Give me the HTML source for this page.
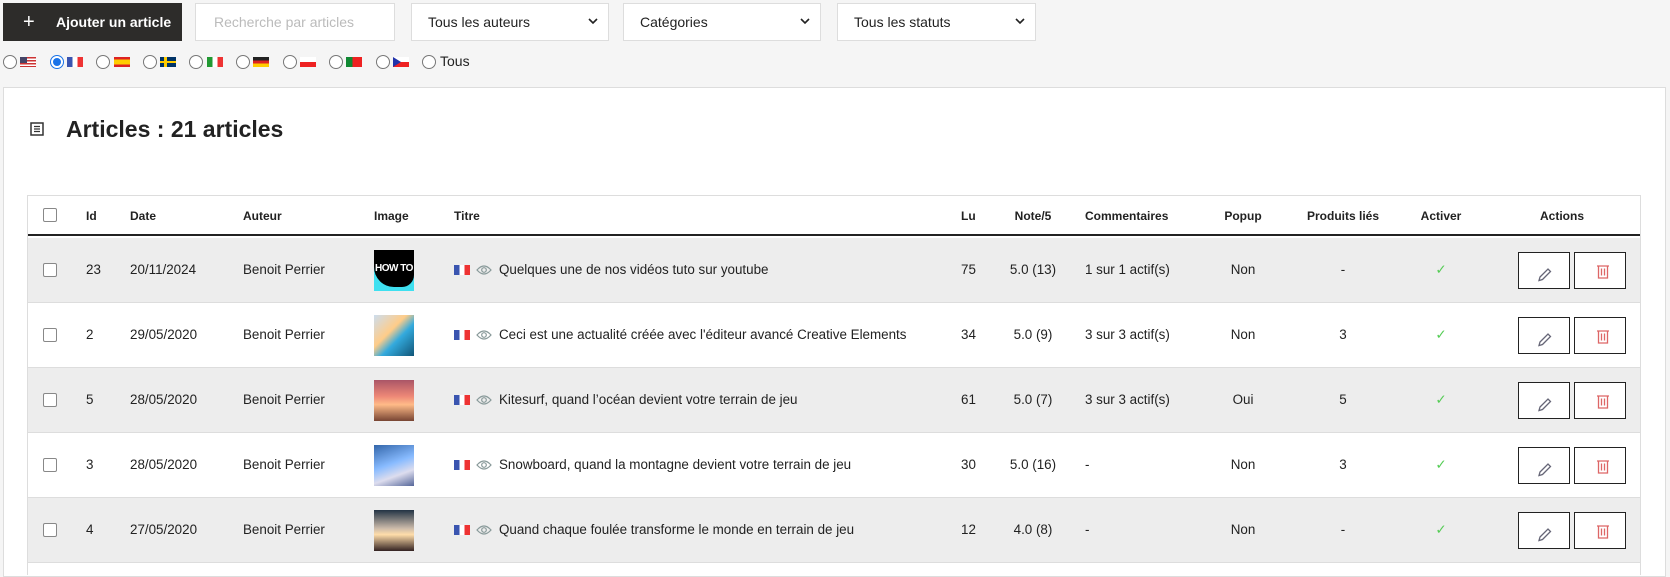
<!DOCTYPE html>
<html><head><meta charset="utf-8"><style>
*{box-sizing:border-box;margin:0;padding:0}
body{width:1670px;height:564px;background:#f5f5f5;font-family:"Liberation Sans",sans-serif;color:#222;position:relative;overflow:hidden;font-size:13px}
.a{position:absolute}
.btn{left:3px;top:3px;width:179px;height:38px;background:#2d2c2a;color:#fff;font-weight:bold;font-size:14px;line-height:38px}
.inp{top:3px;height:38px;background:#fff;border:1px solid #ddd;line-height:36px;padding-left:18px;font-size:14px}
.sel{padding-left:16px;color:#222}
.sel svg{position:absolute;right:10px;top:14px}
.rad{top:55px;width:14px;height:14px;border:1px solid #777;border-radius:50%;background:#fff}
.flag{width:16px;height:10px}
.panel{left:3px;top:87px;width:1663px;height:490px;background:#fff;border:1px solid #ddd}
.tbl{left:27px;top:195px;width:1614px;height:380px;border:1px solid #ddd;border-bottom:none;background:#fff}
.row{position:absolute;left:28px;width:1612px;height:65px;border-bottom:1px solid #ddd}
.row div,.hd div{position:absolute}
.row div{top:0;line-height:64px;font-size:13.4px;white-space:nowrap}
.hd div{top:0;line-height:40px;font-weight:bold;font-size:12px}
.c{text-align:center}
.cb{width:14px;height:14px;border:1px solid #888;border-radius:2px;background:#fff;top:25px!important}
.th{top:12px!important;width:40px;height:41px;overflow:hidden}
.ab{top:14px!important;width:52px;height:37px;border:1px solid #222;background:#fff}
.eye{position:absolute;left:448px;top:26px}
</style></head><body>
<div class="a btn"><span style="position:absolute;left:20px;font-size:20px;font-weight:normal">+</span><span style="position:absolute;left:53px">Ajouter un article</span></div>
<div class="a inp" style="left:195px;width:200px;color:#bbb">Recherche par articles</div>
<div class="a inp sel" style="left:411px;width:198px">Tous les auteurs<svg width="10" height="7"><path d="M1 1l4 4 4-4" stroke="#222" stroke-width="1.6" fill="none"/></svg></div>
<div class="a inp sel" style="left:623px;width:198px">Catégories<svg width="10" height="7"><path d="M1 1l4 4 4-4" stroke="#222" stroke-width="1.6" fill="none"/></svg></div>
<div class="a inp sel" style="left:837px;width:199px">Tous les statuts<svg width="10" height="7"><path d="M1 1l4 4 4-4" stroke="#222" stroke-width="1.6" fill="none"/></svg></div>

<div class="a rad" style="left:3px"></div><div class="a flag" style="left:20px;top:57px;background:repeating-linear-gradient(#c33 0 1.5px,#fff 1.5px 3px)"><div style="width:7px;height:6px;background:#446"></div></div>
<div class="a rad" style="left:50px;border-color:#1a73e8"><div style="margin:2px;width:8px;height:8px;border-radius:50%;background:#1a73e8"></div></div><div class="a flag" style="left:67px;top:57px;background:linear-gradient(90deg,#3a55b0 33%,#fff 33% 66%,#e33 66%)"></div>
<div class="a rad" style="left:96px"></div><div class="a flag" style="left:114px;top:57px;background:linear-gradient(#d22 25%,#fc0 25% 75%,#d22 75%)"></div>
<div class="a rad" style="left:143px"></div><div class="a flag" style="left:160px;top:57px;background:linear-gradient(#036 40%,#fc0 40% 60%,#036 60%)"><div style="position:absolute;left:4px;width:3px;height:10px;background:#fc0"></div></div>
<div class="a rad" style="left:189px"></div><div class="a flag" style="left:207px;top:57px;background:linear-gradient(90deg,#293 33%,#fff 33% 66%,#e33 66%)"></div>
<div class="a rad" style="left:236px"></div><div class="a flag" style="left:253px;top:57px;background:linear-gradient(#222 33%,#d22 33% 66%,#fc0 66%)"></div>
<div class="a rad" style="left:283px"></div><div class="a flag" style="left:300px;top:57px;background:linear-gradient(#fff 50%,#e22 50%)"></div>
<div class="a rad" style="left:329px"></div><div class="a flag" style="left:346px;top:57px;background:linear-gradient(90deg,#183 40%,#e22 40%)"></div>
<div class="a rad" style="left:376px"></div><div class="a flag" style="left:393px;top:57px;background:linear-gradient(#fff 50%,#e22 50%)"><div style="width:0;height:0;border-top:5px solid transparent;border-bottom:5px solid transparent;border-left:8px solid #23a"></div></div>
<div class="a rad" style="left:422px"></div><div class="a" style="left:440px;top:53px;font-size:14px">Tous</div>

<div class="a panel"></div>
<svg class="a" style="left:30px;top:122px" width="14" height="14"><rect x="1" y="1" width="12" height="12" fill="none" stroke="#333" stroke-width="1.5"/><path d="M4 4.5h6M4 7h6M4 9.5h6" stroke="#333" stroke-width="1.3"/></svg>
<div class="a" style="left:66px;top:116px;font-size:23px;font-weight:bold;color:#222">Articles : 21 articles</div>

<div class="a tbl"></div>
<div class="a hd" style="left:28px;top:196px;width:1612px;height:40px;border-bottom:2px solid #222">
<div class="cb" style="left:15px;top:12px!important"></div>
<div style="left:58px">Id</div><div style="left:102px">Date</div><div style="left:215px">Auteur</div><div style="left:346px">Image</div><div style="left:426px">Titre</div><div style="left:933px">Lu</div>
<div class="c" style="left:965px;width:80px">Note/5</div><div style="left:1057px">Commentaires</div><div class="c" style="left:1175px;width:80px">Popup</div><div class="c" style="left:1265px;width:100px">Produits liés</div><div class="c" style="left:1373px;width:80px">Activer</div><div class="c" style="left:1484px;width:100px">Actions</div>
</div>

<div class="row" style="top:238px;background:#ededed">
<div class="cb" style="left:15px"></div><div style="left:58px">23</div><div style="left:102px">20/11/2024</div><div style="left:215px">Benoit Perrier</div>
<div class="th" style="left:346px;background:#3fe0f0"><div style="left:0;top:0;width:40px;height:37px;border-radius:0 0 12px 20px;background:#000;color:#fff;font-weight:bold;font-size:10px;line-height:37px;text-align:center;letter-spacing:-0.5px">HOW TO</div></div>
<div class="flag" style="left:426px;top:27px!important;background:linear-gradient(90deg,#3a55b0 33%,#fff 33% 66%,#e33 66%)"></div>
<svg class="eye" width="16" height="12"><path d="M1 6Q8-2 15 6Q8 14 1 6z" fill="none" stroke="#899" stroke-width="1.2"/><circle cx="8" cy="6" r="2.3" fill="none" stroke="#899" stroke-width="1.2"/></svg>
<div style="left:471px">Quelques une de nos vidéos tuto sur youtube</div>
<div style="left:933px">75</div><div class="c" style="left:965px;width:80px">5.0 (13)</div><div style="left:1057px">1 sur 1 actif(s)</div><div class="c" style="left:1175px;width:80px">Non</div><div class="c" style="left:1265px;width:100px">-</div><div class="c" style="left:1373px;width:80px;color:#5c5">✓</div>
<div class="ab" style="left:1490px"></div><div class="ab" style="left:1546px"></div>
</div>
<div class="row" style="top:303px;background:#fff">
<div class="cb" style="left:15px"></div><div style="left:58px">2</div><div style="left:102px">29/05/2020</div><div style="left:215px">Benoit Perrier</div>
<div class="th" style="left:346px;background:linear-gradient(135deg,#cde 0%,#fc8 40%,#3ad 60%,#157 100%)"></div>
<div class="flag" style="left:426px;top:27px!important;background:linear-gradient(90deg,#3a55b0 33%,#fff 33% 66%,#e33 66%)"></div>
<svg class="eye" width="16" height="12"><path d="M1 6Q8-2 15 6Q8 14 1 6z" fill="none" stroke="#899" stroke-width="1.2"/><circle cx="8" cy="6" r="2.3" fill="none" stroke="#899" stroke-width="1.2"/></svg>
<div style="left:471px">Ceci est une actualité créée avec l'éditeur avancé Creative Elements</div>
<div style="left:933px">34</div><div class="c" style="left:965px;width:80px">5.0 (9)</div><div style="left:1057px">3 sur 3 actif(s)</div><div class="c" style="left:1175px;width:80px">Non</div><div class="c" style="left:1265px;width:100px">3</div><div class="c" style="left:1373px;width:80px;color:#5c5">✓</div>
<div class="ab" style="left:1490px"></div><div class="ab" style="left:1546px"></div>
</div>
<div class="row" style="top:368px;background:#ededed">
<div class="cb" style="left:15px"></div><div style="left:58px">5</div><div style="left:102px">28/05/2020</div><div style="left:215px">Benoit Perrier</div>
<div class="th" style="left:346px;background:linear-gradient(#a56 0%,#e87 40%,#fb8 60%,#743 100%)"></div>
<div class="flag" style="left:426px;top:27px!important;background:linear-gradient(90deg,#3a55b0 33%,#fff 33% 66%,#e33 66%)"></div>
<svg class="eye" width="16" height="12"><path d="M1 6Q8-2 15 6Q8 14 1 6z" fill="none" stroke="#899" stroke-width="1.2"/><circle cx="8" cy="6" r="2.3" fill="none" stroke="#899" stroke-width="1.2"/></svg>
<div style="left:471px">Kitesurf, quand l’océan devient votre terrain de jeu</div>
<div style="left:933px">61</div><div class="c" style="left:965px;width:80px">5.0 (7)</div><div style="left:1057px">3 sur 3 actif(s)</div><div class="c" style="left:1175px;width:80px">Oui</div><div class="c" style="left:1265px;width:100px">5</div><div class="c" style="left:1373px;width:80px;color:#5c5">✓</div>
<div class="ab" style="left:1490px"></div><div class="ab" style="left:1546px"></div>
</div>
<div class="row" style="top:433px;background:#fff">
<div class="cb" style="left:15px"></div><div style="left:58px">3</div><div style="left:102px">28/05/2020</div><div style="left:215px">Benoit Perrier</div>
<div class="th" style="left:346px;background:linear-gradient(160deg,#36a 0%,#8bf 45%,#dde 70%,#569 100%)"></div>
<div class="flag" style="left:426px;top:27px!important;background:linear-gradient(90deg,#3a55b0 33%,#fff 33% 66%,#e33 66%)"></div>
<svg class="eye" width="16" height="12"><path d="M1 6Q8-2 15 6Q8 14 1 6z" fill="none" stroke="#899" stroke-width="1.2"/><circle cx="8" cy="6" r="2.3" fill="none" stroke="#899" stroke-width="1.2"/></svg>
<div style="left:471px">Snowboard, quand la montagne devient votre terrain de jeu</div>
<div style="left:933px">30</div><div class="c" style="left:965px;width:80px">5.0 (16)</div><div style="left:1057px">-</div><div class="c" style="left:1175px;width:80px">Non</div><div class="c" style="left:1265px;width:100px">3</div><div class="c" style="left:1373px;width:80px;color:#5c5">✓</div>
<div class="ab" style="left:1490px"></div><div class="ab" style="left:1546px"></div>
</div>
<div class="row" style="top:498px;background:#ededed">
<div class="cb" style="left:15px"></div><div style="left:58px">4</div><div style="left:102px">27/05/2020</div><div style="left:215px">Benoit Perrier</div>
<div class="th" style="left:346px;background:linear-gradient(#234 0%,#cba 45%,#fda 60%,#322 100%)"></div>
<div class="flag" style="left:426px;top:27px!important;background:linear-gradient(90deg,#3a55b0 33%,#fff 33% 66%,#e33 66%)"></div>
<svg class="eye" width="16" height="12"><path d="M1 6Q8-2 15 6Q8 14 1 6z" fill="none" stroke="#899" stroke-width="1.2"/><circle cx="8" cy="6" r="2.3" fill="none" stroke="#899" stroke-width="1.2"/></svg>
<div style="left:471px">Quand chaque foulée transforme le monde en terrain de jeu</div>
<div style="left:933px">12</div><div class="c" style="left:965px;width:80px">4.0 (8)</div><div style="left:1057px">-</div><div class="c" style="left:1175px;width:80px">Non</div><div class="c" style="left:1265px;width:100px">-</div><div class="c" style="left:1373px;width:80px;color:#5c5">✓</div>
<div class="ab" style="left:1490px"></div><div class="ab" style="left:1546px"></div>
</div>

<svg class="a" style="left:0;top:0" width="1670" height="564">
<g id="ic">
<path d="M1540 277l8-8 2.5 2.5-8 8-3.5 1z" fill="none" stroke="#667" stroke-width="1.3"/>
<path d="M1597 266h12M1598.5 266v12h9v-12M1601.5 268.5v7M1604.5 268.5v7" fill="none" stroke="#d66" stroke-width="1.3"/>
</g>
<use href="#ic" y="65"/><use href="#ic" y="130"/><use href="#ic" y="195"/><use href="#ic" y="260"/>
</svg>
</body></html>
